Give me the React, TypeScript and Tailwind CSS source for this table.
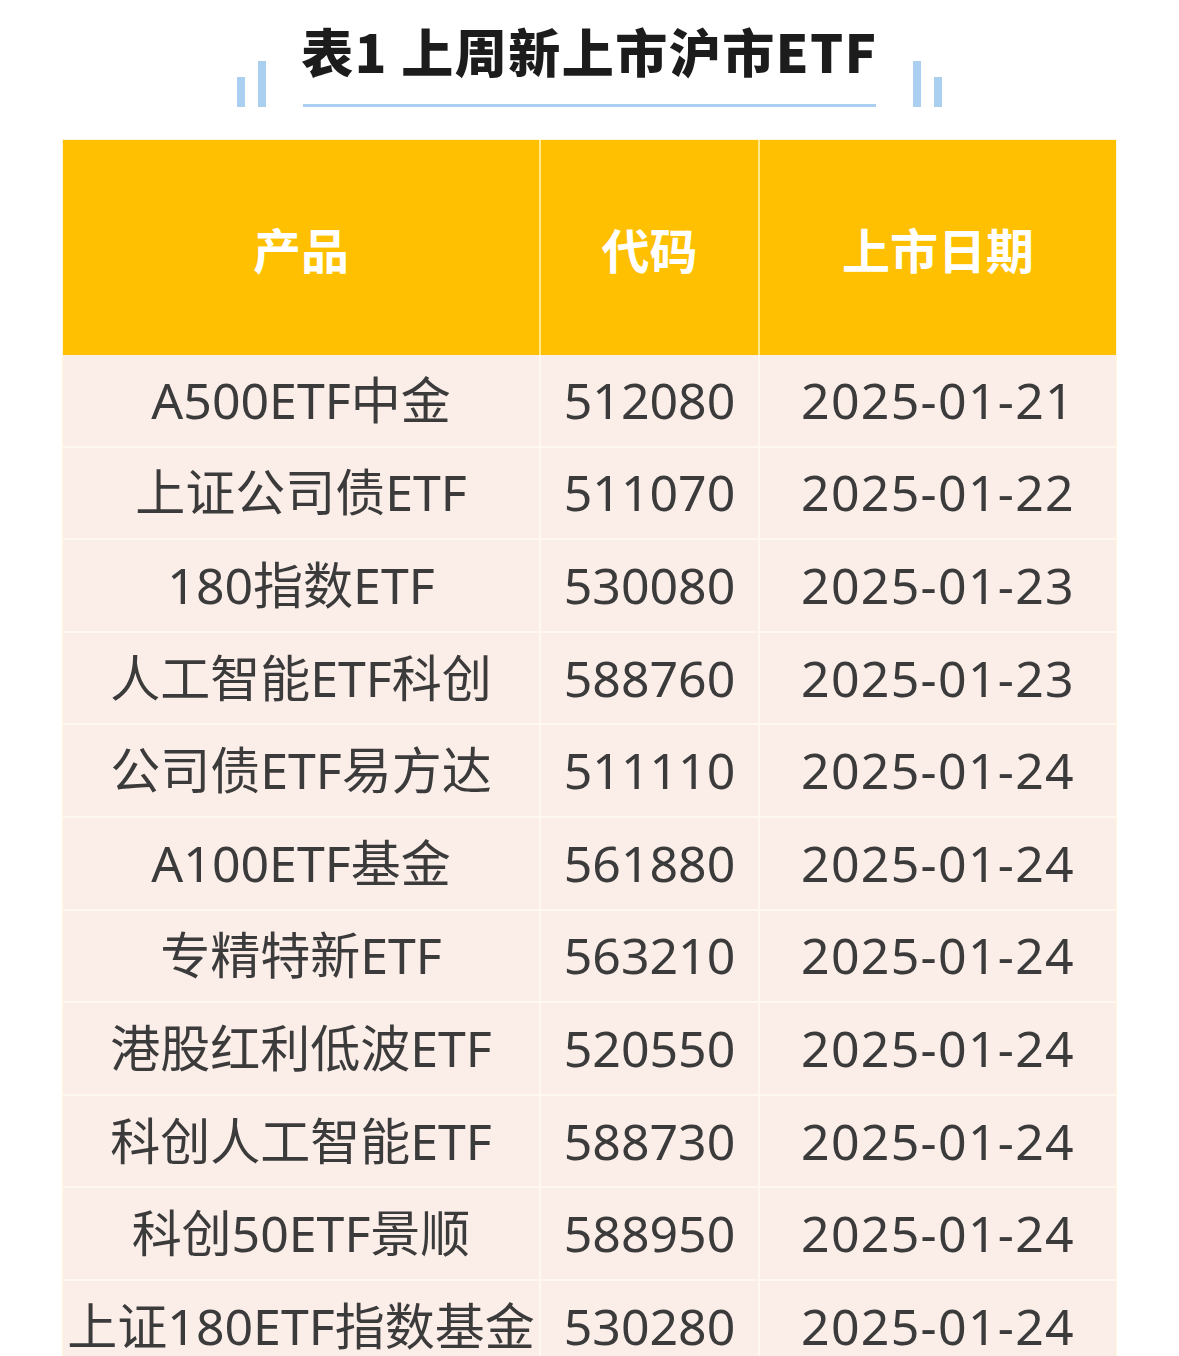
import React from "react";

const rows: [string, string, string][] = [
  ["A500ETF中金", "512080", "2025-01-21"],
  ["上证公司债ETF", "511070", "2025-01-22"],
  ["180指数ETF", "530080", "2025-01-23"],
  ["人工智能ETF科创", "588760", "2025-01-23"],
  ["公司债ETF易方达", "511110", "2025-01-24"],
  ["A100ETF基金", "561880", "2025-01-24"],
  ["专精特新ETF", "563210", "2025-01-24"],
  ["港股红利低波ETF", "520550", "2025-01-24"],
  ["科创人工智能ETF", "588730", "2025-01-24"],
  ["科创50ETF景顺", "588950", "2025-01-24"],
  ["上证180ETF指数基金", "530280", "2025-01-24"],
];

const font = { fontFamily: '"Noto Sans", "Noto Sans CJK SC", sans-serif' };

function Deco({ mirrored }: { mirrored?: boolean }) {
  return (
    <div className={`flex items-end gap-[13px] ${mirrored ? "flex-row-reverse" : ""}`}>
      <div className="w-[8px] h-[30px] bg-[#aacff0]" />
      <div className="w-[8px] h-[46px] bg-[#aacff0]" />
    </div>
  );
}

export default function App() {
  return (
    <div className="w-[1179px] h-[1356px] bg-white overflow-hidden" style={font}>
      <div className="flex justify-center items-end gap-[37px] h-[108px] pb-[1px]">
        <Deco />
        <div className="flex flex-col items-center w-[573px]">
          <div
            className="text-[52px] leading-[52px] font-black text-[#1c1c1c] tracking-[1.5px] whitespace-nowrap"
            style={{ fontFamily: '"Noto Sans CJK SC", sans-serif' }}
          >
            表1 上周新上市沪市ETF
          </div>
          <div className="mt-[27px] h-[3px] w-full bg-[#aacff0]" />
        </div>
        <Deco mirrored />
      </div>

      <div className="mt-[32px] mx-auto w-[1053px] outline outline-1 outline-[#fff7dc]">
        <div className="grid grid-cols-[476px_217px_356px] gap-x-[2px] bg-[#ffe98c] h-[215px]">
          {["产品", "代码", "上市日期"].map((h) => (
            <div
              key={h}
              className="bg-[#fec000] flex items-center justify-center text-white text-[48px] font-bold"
              style={{ fontFamily: '"Noto Sans CJK SC", sans-serif' }}
            >
              {h}
            </div>
          ))}
        </div>
        <div className="grid grid-cols-[476px_217px_356px] gap-[2px] bg-[#fff8ef]">
          {rows.map((r, i) => (
            <React.Fragment key={i}>
              {r.map((c, j) => (
                <div
                  key={j}
                  className={`bg-[#fbede8] h-[90.6px] flex items-center justify-center text-[50px] text-[#3b3b3b] whitespace-nowrap ${
                    j === 2 ? "tracking-[1.3px]" : ""
                  }`}
                >
                  {c}
                </div>
              ))}
            </React.Fragment>
          ))}
        </div>
      </div>
    </div>
  );
}
